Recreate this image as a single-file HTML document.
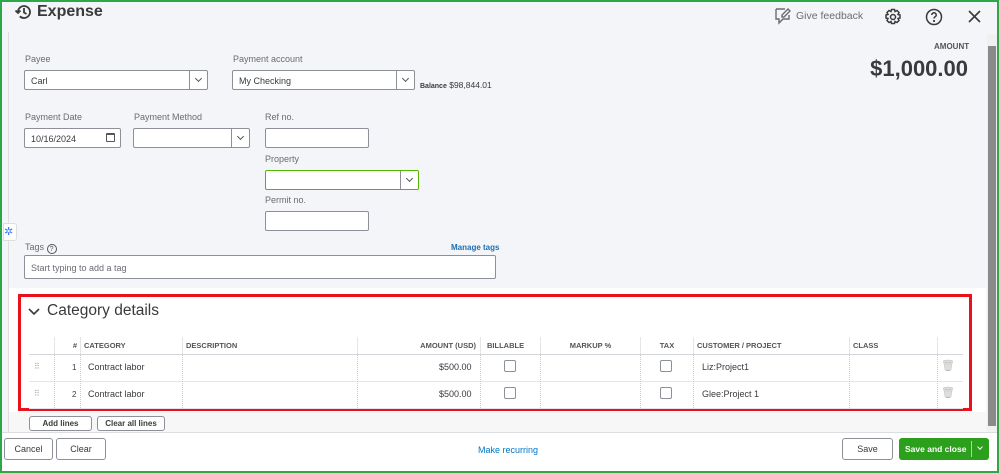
<!DOCTYPE html><html><head><style>
*{box-sizing:border-box;margin:0;padding:0}
body{width:999px;height:473px;overflow:hidden;font-family:"Liberation Sans",sans-serif;background:#f4f5f8;position:relative;color:#393a3d}
.a{position:absolute}
.lbl{font-size:9px;color:#6b6c72}
.in{position:absolute;background:#fff;border:1px solid #8d9096;border-radius:2px;height:20px;font-size:9px;padding:5px 6px;color:#393a3d}
.dd{position:absolute;right:0;top:0;width:18px;height:18px;border-left:1px solid #8d9096}
.dd:after{content:"";position:absolute;left:6px;top:5px;width:4px;height:4px;border-right:1px solid #555;border-bottom:1px solid #555;transform:rotate(45deg)}
.th{position:absolute;top:337px;height:17px;font-size:7.5px;font-weight:bold;color:#555;padding-top:4px;border-left:1px solid #e3e5e8}
.td{position:absolute;font-size:9px;color:#393a3d}
.cb{position:absolute;width:12px;height:12px;border:1px solid #8d9096;border-radius:2px;background:#fff}
.btn{position:absolute;background:#fff;border:1px solid #8d9096;border-radius:3px;font-size:9px;font-weight:bold;color:#393a3d;text-align:center}
</style></head><body>
<div class="a" style="left:0;top:0;width:999px;height:473px;border:2px solid #2ca84a;z-index:10;pointer-events:none"></div>
<svg class="a" style="left:14px;top:3px" width="18" height="18" viewBox="0 0 18 18" fill="none" stroke="#393a3d" stroke-width="1.8"><path d="M4 9a6 6 0 1 1 1.8 4.3"/><path d="M1.5 7.5L4 10l2.5-2.5"/><path d="M10 5v4.5l2.5 1.5"/></svg>
<div class="a" style="left:37px;top:3px;font-size:16px;font-weight:bold;color:#393a3d">Expense</div>
<svg class="a" style="left:773px;top:7px" width="20" height="18" viewBox="0 0 20 18" fill="none" stroke="#6b6c72" stroke-width="1.4"><path d="M3 2h9M3 2v10h3v4l4-4h6V8"/><path d="M15 2l2 2-6 6h-2v-2z"/></svg>
<div class="a" style="left:796px;top:10px;font-size:10.5px;color:#6b6c72">Give feedback</div>
<svg class="a" style="left:884px;top:8px" width="18" height="18" viewBox="0 0 18 18" fill="none" stroke="#393a3d" stroke-width="1.5"><circle cx="9" cy="9" r="2.5"/><path d="M7.5 1.5h3l.5 2 2-1 2 2-1 2 2 .5v3l-2 .5 1 2-2 2-2-1-.5 2h-3l-.5-2-2 1-2-2 1-2-2-.5v-3l2-.5-1-2 2-2 2 1z"/></svg>
<svg class="a" style="left:925px;top:8px" width="18" height="18" viewBox="0 0 18 18" fill="none" stroke="#393a3d" stroke-width="1.5"><circle cx="9" cy="9" r="7.5"/><path d="M6.8 7a2.2 2.2 0 1 1 3 2c-.6.3-.8.7-.8 1.5"/><circle cx="9" cy="13" r=".4" fill="#393a3d"/></svg>
<svg class="a" style="left:967px;top:9px" width="15" height="15" viewBox="0 0 15 15" stroke="#393a3d" stroke-width="1.6"><path d="M2 2l11 11M13 2L2 13"/></svg>
<div class="a" style="left:8px;top:32px;width:1px;height:400px;background:#dcdde0"></div>
<div class="a" style="left:934px;top:42px;font-size:8px;font-weight:bold;color:#555">AMOUNT</div>
<div class="a" style="right:31px;top:56px;font-size:22px;font-weight:bold;color:#393a3d">$1,000.00</div>
<div class="a" style="left:987px;top:35px;width:10px;height:396px;background:#f0f0f0"></div>
<div class="a" style="left:988px;top:46px;width:8px;height:380px;background:#8a8a8a"></div>
<div class="lbl a" style="left:25px;top:54px">Payee</div>
<div class="in" style="left:24px;top:70px;width:184px">Carl<div class="dd"></div></div>
<div class="lbl a" style="left:233px;top:54px">Payment account</div>
<div class="in" style="left:232px;top:70px;width:183px">My Checking<div class="dd"></div></div>
<div class="a" style="left:420px;top:80px;font-size:8.5px;color:#393a3d"><b style="font-size:7px">Balance</b> $98,844.01</div>
<div class="lbl a" style="left:25px;top:112px">Payment Date</div>
<div class="in" style="left:24px;top:128px;width:97px">10/16/2024<span style="position:absolute;right:5px;top:4px;width:9px;height:9px;border:1px solid #555;border-radius:1px;border-top-width:2px"></span></div>
<div class="lbl a" style="left:134px;top:112px">Payment Method</div>
<div class="in" style="left:133px;top:128px;width:117px"><div class="dd"></div></div>
<div class="lbl a" style="left:265px;top:112px">Ref no.</div>
<div class="in" style="left:265px;top:128px;width:104px"></div>
<div class="lbl a" style="left:265px;top:154px">Property</div>
<div class="in" style="left:265px;top:170px;width:154px;border-color:#53b700"><div class="dd" style="border-color:#8d9096"></div></div>
<div class="lbl a" style="left:265px;top:195px">Permit no.</div>
<div class="in" style="left:265px;top:211px;width:104px"></div>
<div class="a" style="left:3px;top:223px;width:14px;height:18px;background:#fff;border:1px solid #ddd;border-radius:0 3px 3px 0;color:#3b7bff;font-size:11px;line-height:16px">✲</div>
<div class="lbl a" style="left:25px;top:242px">Tags <span style="display:inline-block;width:10px;height:10px;border:1px solid #555;border-radius:50%;font-size:7px;text-align:center;line-height:9px;color:#555;vertical-align:-1px">?</span></div>
<div class="a" style="left:451px;top:243px;font-size:8px;font-weight:bold;color:#1f6fb2">Manage tags</div>
<div class="in" style="left:24px;top:255px;width:472px;height:24px;color:#6b6c72;padding-top:7px">Start typing to add a tag</div>
<div class="a" style="left:9px;top:288px;width:977px;height:144px;background:#fff"></div>
<div class="a" style="left:9px;top:412px;width:977px;height:20px;background:#f7f7f8"></div>
<div class="a" style="left:18px;top:294px;width:954px;height:117px;border:3px solid #e8111c"></div>
<svg class="a" style="left:28px;top:307px" width="12" height="10" viewBox="0 0 12 10" fill="none" stroke="#393a3d" stroke-width="1.6"><path d="M1 2l5 5 5-5"/></svg>
<div class="a" style="left:47px;top:302px;font-size:15.5px;color:#393a3d">Category details</div>
<div class="a" style="left:29px;top:354px;width:934px;height:1px;background:#d4d7dc"></div>
<div class="a" style="left:29px;top:381px;width:934px;height:1px;background:#e3e5e8"></div>
<div class="a" style="left:29px;top:408px;width:934px;height:1px;background:#e3e5e8"></div>
<div class="th" style="left:54px;width:26px;text-align:right;padding-right:3px">#</div>
<div class="th" style="left:80px;width:102px;padding-left:3px">CATEGORY</div>
<div class="th" style="left:182px;width:175px;padding-left:3px">DESCRIPTION</div>
<div class="th" style="left:357px;width:123px;text-align:right;padding-right:4px">AMOUNT (USD)</div>
<div class="th" style="left:480px;width:60px;padding-left:6px">BILLABLE</div>
<div class="th" style="left:540px;width:100px;text-align:center">MARKUP %</div>
<div class="th" style="left:640px;width:53px;text-align:center">TAX</div>
<div class="th" style="left:693px;width:156px;padding-left:3px">CUSTOMER / PROJECT</div>
<div class="th" style="left:849px;width:88px;padding-left:3px">CLASS</div>
<div class="th" style="left:937px;width:26px"></div>
<div class="a" style="left:54px;top:354px;width:1px;height:54px;border-left:1px dotted #ccc"></div>
<div class="a" style="left:80px;top:354px;width:1px;height:54px;border-left:1px dotted #ccc"></div>
<div class="a" style="left:182px;top:354px;width:1px;height:54px;border-left:1px dotted #ccc"></div>
<div class="a" style="left:357px;top:354px;width:1px;height:54px;border-left:1px dotted #ccc"></div>
<div class="a" style="left:480px;top:354px;width:1px;height:54px;border-left:1px dotted #ccc"></div>
<div class="a" style="left:540px;top:354px;width:1px;height:54px;border-left:1px dotted #ccc"></div>
<div class="a" style="left:640px;top:354px;width:1px;height:54px;border-left:1px dotted #ccc"></div>
<div class="a" style="left:693px;top:354px;width:1px;height:54px;border-left:1px dotted #ccc"></div>
<div class="a" style="left:849px;top:354px;width:1px;height:54px;border-left:1px dotted #ccc"></div>
<div class="a" style="left:937px;top:354px;width:1px;height:54px;border-left:1px dotted #ccc"></div>
<div class="td" style="left:34px;top:362px;color:#aaa;font-size:8px">⠿</div>
<div class="td" style="left:72px;top:363px;font-size:8px">1</div>
<div class="td" style="left:88px;top:362px">Contract labor</div>
<div class="td" style="left:439px;top:362px">$500.00</div>
<div class="cb" style="left:504px;top:360px"></div><div class="cb" style="left:660px;top:360px"></div>
<div class="td" style="left:702px;top:362px">Liz:Project1</div>
<div class="td" style="left:941px;top:359px;color:#bbb;font-size:11px">🗑</div>
<div class="td" style="left:34px;top:389px;color:#aaa;font-size:8px">⠿</div>
<div class="td" style="left:72px;top:390px;font-size:8px">2</div>
<div class="td" style="left:88px;top:389px">Contract labor</div>
<div class="td" style="left:439px;top:389px">$500.00</div>
<div class="cb" style="left:504px;top:387px"></div><div class="cb" style="left:660px;top:387px"></div>
<div class="td" style="left:702px;top:389px">Glee:Project 1</div>
<div class="td" style="left:941px;top:386px;color:#bbb;font-size:11px">🗑</div>
<div class="btn" style="left:29px;top:416px;width:63px;height:15px;font-size:8px;line-height:13px">Add lines</div>
<div class="btn" style="left:97px;top:416px;width:68px;height:15px;font-size:8px;line-height:13px">Clear all lines</div>
<div class="a" style="left:2px;top:432px;width:995px;height:39px;background:#fff;border-top:1px solid #dcdde0"></div>
<div class="btn" style="left:4px;top:438px;width:49px;height:22px;line-height:20px;font-weight:normal">Cancel</div>
<div class="btn" style="left:56px;top:438px;width:50px;height:22px;line-height:20px;font-weight:normal">Clear</div>
<div class="a" style="left:478px;top:445px;font-size:9px;color:#0077c5">Make recurring</div>
<div class="btn" style="left:842px;top:438px;width:51px;height:22px;line-height:20px;font-weight:normal">Save</div>
<div class="a" style="left:899px;top:438px;width:90px;height:22px;background:#2ca01c;border-radius:3px;color:#fff;font-size:8.5px;font-weight:bold;line-height:22px;padding-left:6px;white-space:nowrap">Save and close<span style="position:absolute;left:72px;top:3px;width:1px;height:16px;background:#fff;opacity:.6"></span><span style="position:absolute;left:79px;top:7px;width:4px;height:4px;border-right:1px solid #fff;border-bottom:1px solid #fff;transform:rotate(45deg)"></span></div>
</body></html>
